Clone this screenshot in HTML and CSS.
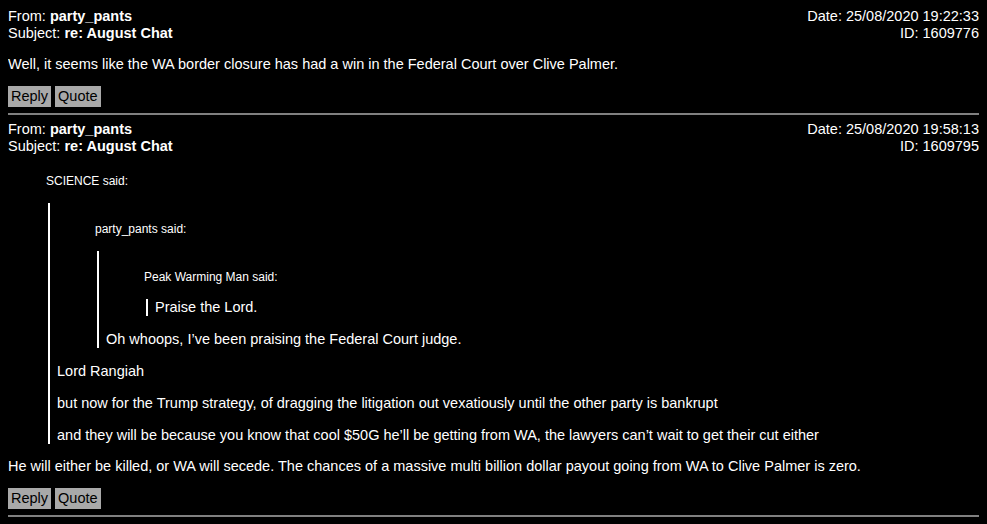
FILE: index.html
```html
<!DOCTYPE html>
<html>
<head>
<meta charset="utf-8">
<link rel="stylesheet" href="styles.css">
</head>
<body>
<div class="post">
  <div class="head">
    <div class="meta">From: <b>party_pants</b><br>Subject: <b>re: August Chat</b></div>
    <div class="meta right">Date: 25/08/2020 19:22:33<br>ID: 1609776</div>
  </div>
  <div class="body">
    <p>Well, it seems like the WA border closure has had a win in the Federal Court over Clive Palmer.</p>
  </div>
  <div class="actions"><button class="btn">Reply</button> <button class="btn">Quote</button></div>
</div>
<hr class="sep">
<div class="post">
  <div class="head">
    <div class="meta">From: <b>party_pants</b><br>Subject: <b>re: August Chat</b></div>
    <div class="meta right">Date: 25/08/2020 19:58:13<br>ID: 1609795</div>
  </div>
  <div class="body">
    <div class="quote">
      <div class="said">SCIENCE said:</div>
      <div class="qbox">
        <div class="quote">
          <div class="said">party_pants said:</div>
          <div class="qbox">
            <div class="quote">
              <div class="said">Peak Warming Man said:</div>
              <div class="qbox">
                <p>Praise the Lord.</p>
              </div>
            </div>
            <p>Oh whoops, I’ve been praising the Federal Court judge.</p>
          </div>
        </div>
        <p>Lord Rangiah</p>
        <p>but now for the Trump strategy, of dragging the litigation out vexatiously until the other party is bankrupt</p>
        <p>and they will be because you know that cool $50G he’ll be getting from WA, the lawyers can’t wait to get their cut either</p>
      </div>
    </div>
    <p>He will either be killed, or WA will secede. The chances of a massive multi billion dollar payout going from WA to Clive Palmer is zero.</p>
  </div>
  <div class="actions"><button class="btn">Reply</button> <button class="btn">Quote</button></div>
</div>
<hr class="sep">
</body>
</html>
```

FILE: styles.css
```css
html, body {
  background: #000;
}
body {
  margin: 8px;
  color: #fff;
  font-family: "Liberation Sans", Arial, sans-serif;
  font-size: 14.5px;
  line-height: 17px;
}
.head {
  display: flex;
  justify-content: space-between;
}
.right {
  text-align: right;
}
.body p {
  margin: 14px 0;
}
.qbox p {
  margin: 15px 0;
}
.quote {
  margin: 0;
}
.said {
  font-size: 12px;
  line-height: 14px;
  margin: 19px 0 15px 38px;
}
.qbox {
  display: flow-root;
  margin-left: 40px;
  border-left: 2px solid #fff;
  padding-left: 7px;
}
.qbox > :first-child {
  margin-top: 0;
}
.qbox > .quote:first-child > .said {
  margin-top: 19px;
}
.qbox > :last-child {
  margin-bottom: 0;
}
.qbox > p:first-child {
  margin-top: 0;
}
.body > p:last-child {
  margin-bottom: 0;
}
.actions {
  margin-top: 13px;
  display: flex;
  gap: 4px;
}
.btn {
  font-family: "Liberation Sans", Arial, sans-serif;
  font-size: 14.5px;
  line-height: 17px;
  color: #000;
  background: #a9a9a9;
  border: none;
  border-radius: 0;
  padding: 2px 3px;
  margin: 0;
}
.sep {
  border: none;
  height: 2px;
  background: #808080;
  margin: 6px 0 6px;
}
```
